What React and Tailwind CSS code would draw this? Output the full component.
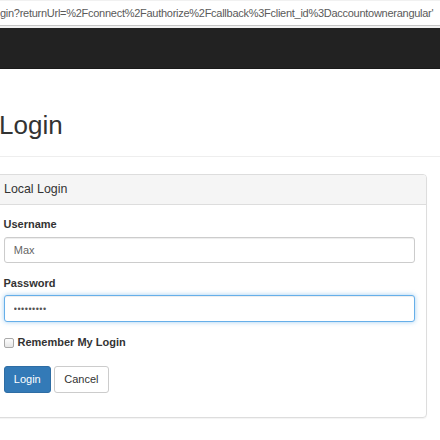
import React from 'react';

const AddressBar = () => (
  <div className="h-[28px] bg-[#f1f1f1] pt-[1px]">
    <div className="h-[25px] bg-white border-b border-[#c6c6c6] flex items-center overflow-hidden whitespace-nowrap">
      <span className="text-[11px] tracking-[-0.27px] text-[#5a5a5a] font-['Liberation_Sans',Arial,sans-serif]">
        gin?returnUrl=%2Fconnect%2Fauthorize%2Fcallback%3Fclient_id%3Daccountownerangular'
      </span>
    </div>
  </div>
);

const Field = ({ label, children }) => (
  <div className="mb-[12.5px]">
    <label className="block mb-[3.9px] text-[11px] leading-[15.7px] font-bold text-[#333]">{label}</label>
    {children}
  </div>
);

const App = () => {
  return (
    <div className="w-[440px] h-[440px] overflow-hidden bg-white font-['Liberation_Sans',Arial,sans-serif] text-[#333]">
      <AddressBar />
      <div className="h-[41px] bg-[#222] border-b border-[#1a1a1a]" />

      <div className="border-b border-[#eee] pt-[42px] pb-[16px]">
        <h1 className="text-[26px] leading-[28.6px] font-normal text-[#333] -ml-[1px]">Login</h1>
      </div>

      <div className="mt-[17px] -ml-[9px] w-[436px] border border-[#ddd] rounded-[4px] shadow-[0_1px_1px_rgba(0,0,0,0.05)]">
        <div className="h-[30px] bg-[#f5f5f5] border-b border-[#ddd] rounded-t-[3px] flex items-center pl-[12px]">
          <span className="text-[12.4px] text-[#333]">Local Login</span>
        </div>
        <div className="px-[11.5px] pt-[12.5px] pb-[24px]">
          <Field label="Username">
            <input
              type="text"
              defaultValue="Max"
              className="block w-full h-[26.5px] px-[9.3px] border border-[#ccc] rounded-[3px] text-[11px] text-[#666] bg-white outline-none shadow-[inset_0_1px_1px_rgba(0,0,0,0.075)]"
            />
          </Field>
          <Field label="Password">
            <input
              type="password"
              defaultValue="123456789"
              className="block w-full h-[26.5px] px-[9.3px] border border-[#66afe9] rounded-[3px] text-[9px] tracking-[0.5px] text-[#555] bg-white outline-none shadow-[inset_0_1px_1px_rgba(0,0,0,0.075),0_0_5px_rgba(102,175,233,0.6)]"
            />
          </Field>
          <div className="mt-[13px] mb-[16px] flex items-center h-[15.7px]">
            <span className="w-[10px] h-[10px] border border-[#a9a9a9] rounded-[2px] bg-gradient-to-b from-[#fdfdfd] to-[#e6e6e6] mr-[4px] shrink-0" />
            <span className="text-[11px] font-bold text-[#333]">Remember My Login</span>
          </div>
          <div className="flex gap-[3px]">
            <button className="h-[26.5px] px-[9.3px] bg-[#337ab7] border border-[#2e6da4] rounded-[3px] text-white text-[11px]">
              Login
            </button>
            <button className="h-[26.5px] px-[9.3px] bg-white border border-[#ccc] rounded-[3px] text-[#333] text-[11px]">
              Cancel
            </button>
          </div>
        </div>
      </div>
    </div>
  );
};

export default App;
